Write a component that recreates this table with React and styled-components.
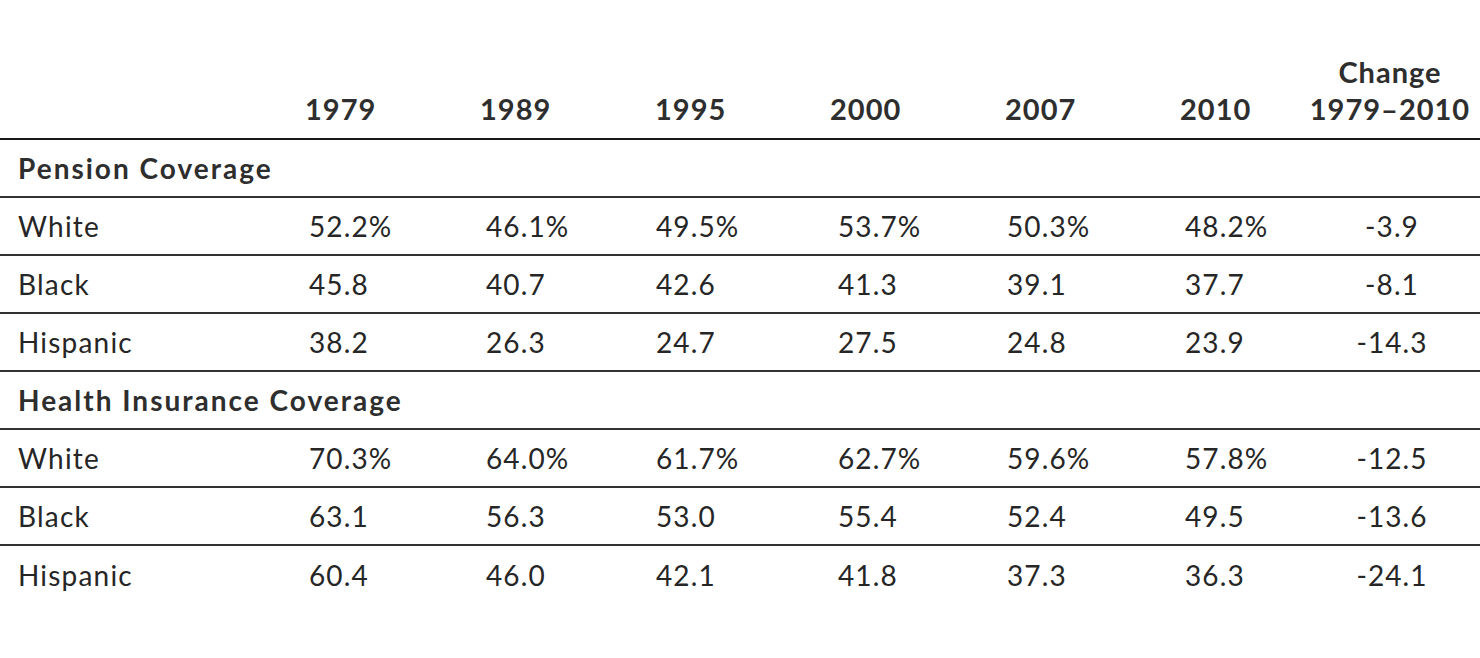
import styled, { createGlobalStyle } from "styled-components";

const GlobalStyle = createGlobalStyle`
    html, body {
        margin: 0;
        padding: 0;
        background: #fff;
    }
    body {
        font-family: Lato, "Open Sans", "Liberation Sans", sans-serif;
        color: #262626;
    }
`;

const cols = "305px 175px 175px 175px 175px 175px 124px 176px";

const Table = styled.div`
    width: 1480px;
    height: 658px;
    display: flex;
    flex-direction: column;
`;

const HeaderRow = styled.div`
    display: grid;
    grid-template-columns: ${cols};
    align-items: end;
    height: 140px;
    box-sizing: border-box;
    border-bottom: 2px solid #1a1a1a;
`;

const HeadCell = styled.div`
    font-size: 29px;
    font-weight: 700;
    line-height: 37px;
    padding-bottom: 11px;
    color: #2e2e2e;
    letter-spacing: 1px;
    text-align: ${p => (p.$center ? "center" : "left")};
    padding-right: ${p => (p.$center ? "4px" : "0")};
`;

const Row = styled.div`
    display: grid;
    grid-template-columns: ${cols};
    align-items: center;
    height: 58px;
    box-sizing: border-box;
    border-bottom: ${p => (p.$last ? "none" : "2px solid #333")};
`;

const SectionTitle = styled.div`
    grid-column: 1 / -1;
    padding-left: 18px;
    font-size: 28px;
    font-weight: 700;
    color: #2e2e2e;
    letter-spacing: 2px;
`;

const Label = styled.div`
    padding-left: 18px;
    font-size: 28px;
    letter-spacing: 1.2px;
`;

const Cell = styled.div`
    font-size: 28px;
    letter-spacing: 1.1px;
    padding-left: ${p => p.$pad || 0}px;
    text-align: ${p => (p.$center ? "center" : "left")};
`;

const years = ["1979", "1989", "1995", "2000", "2007", "2010"];
const pads = [4, 6, 1, 8, 2, 5];

const sections = [
    {
        title: "Pension Coverage",
        rows: [
            ["White", "52.2%", "46.1%", "49.5%", "53.7%", "50.3%", "48.2%", "-3.9"],
            ["Black", "45.8", "40.7", "42.6", "41.3", "39.1", "37.7", "-8.1"],
            ["Hispanic", "38.2", "26.3", "24.7", "27.5", "24.8", "23.9", "-14.3"],
        ],
    },
    {
        title: "Health Insurance Coverage",
        rows: [
            ["White", "70.3%", "64.0%", "61.7%", "62.7%", "59.6%", "57.8%", "-12.5"],
            ["Black", "63.1", "56.3", "53.0", "55.4", "52.4", "49.5", "-13.6"],
            ["Hispanic", "60.4", "46.0", "42.1", "41.8", "37.3", "36.3", "-24.1"],
        ],
    },
];

export default function App() {
    return (
        <>
            <GlobalStyle />
            <Table>
                <HeaderRow>
                    <HeadCell />
                    {years.map(y => <HeadCell key={y}>{y}</HeadCell>)}
                    <HeadCell $center>Change<br />1979–2010</HeadCell>
                </HeaderRow>
                {sections.map((s, si) => (
                    <div key={s.title}>
                        <Row><SectionTitle>{s.title}</SectionTitle></Row>
                        {s.rows.map((r, ri) => (
                            <Row key={ri} $last={si === sections.length - 1 && ri === s.rows.length - 1}>
                                <Label>{r[0]}</Label>
                                {r.slice(1, 7).map((v, i) => <Cell key={i} $pad={pads[i]}>{v}</Cell>)}
                                <Cell $center>{r[7]}</Cell>
                            </Row>
                        ))}
                    </div>
                ))}
            </Table>
        </>
    );
}
